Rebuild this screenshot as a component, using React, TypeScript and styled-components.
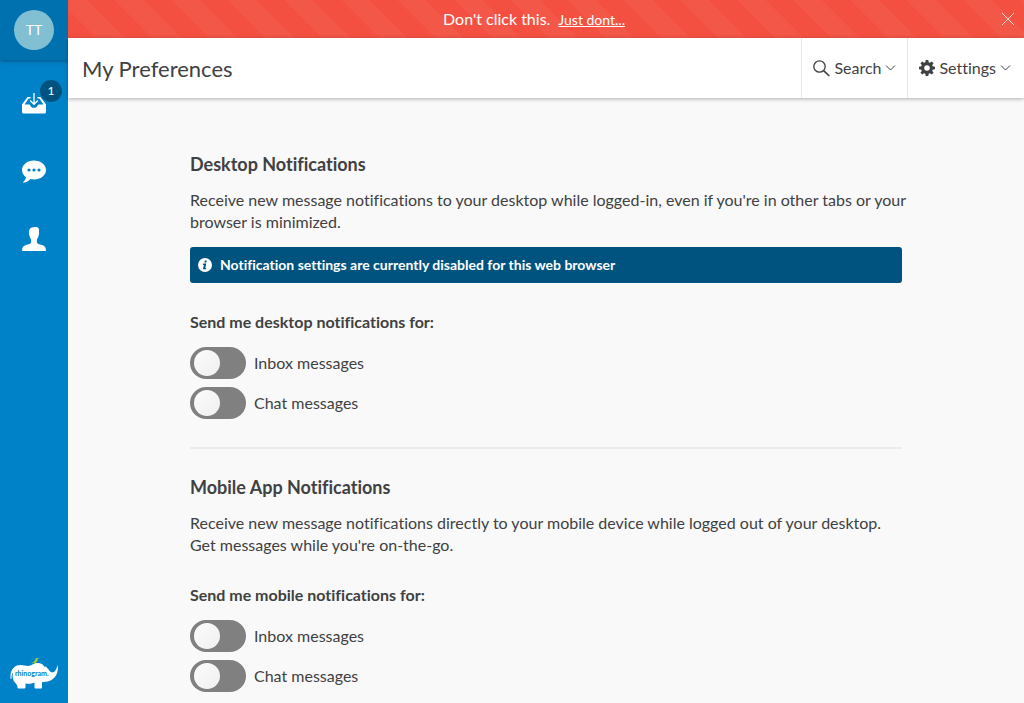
import React from 'react';
import styled, { createGlobalStyle } from 'styled-components';

const GlobalStyle = createGlobalStyle`
  *, *::before, *::after { box-sizing: border-box; }
  body {
    margin: 0;
    background: #f9f9f9;
    color: #3f4142;
    font: 16px/22px Lato, "Liberation Sans", sans-serif;
    font-variant-ligatures: none;
  }
  button { font: inherit; font-variant-ligatures: none; color: inherit; border: 0; padding: 0; background: none; cursor: pointer; }
`;

const Shell = styled.div`
  display: grid;
  grid-template-columns: 68px minmax(0, 1fr);
  height: 100vh;
  overflow: hidden;
`;

const Sidebar = styled.nav`
  display: flex;
  flex-direction: column;
  align-items: center;
  background: #0082c8;
  padding-bottom: 12px;
`;

const AvatarPanel = styled.div`
  display: flex;
  align-self: stretch;
  justify-content: center;
  align-items: center;
  height: 60px;
  background: #0071af;
  box-shadow: 0 1px 4px rgba(0, 0, 0, 0.35);
`;

const Avatar = styled.button`
  width: 40px;
  height: 40px;
  border-radius: 50%;
  background: #80c0d2;
  color: #fff;
  font-size: 14px;
`;

const NavList = styled.ul`
  flex: 1;
  list-style: none;
  margin: 0;
  padding: 9px 0 0;
`;

const NavLink = styled.a`
  position: relative;
  display: flex;
  align-items: center;
  justify-content: center;
  width: 68px;
  height: 68px;
`;

const Badge = styled.span`
  position: absolute;
  top: 11px;
  right: 6px;
  width: 22px;
  height: 22px;
  border-radius: 50%;
  background: #00537f;
  color: #fff;
  font-size: 12px;
  text-align: center;
`;

const Page = styled.div`
  display: flex;
  flex-direction: column;
  min-height: 0;
`;

const Alert = styled.div`
  display: grid;
  grid-template-columns: 1fr 32px;
  align-items: center;
  flex: none;
  height: 38px;
  padding-left: 8px;
  color: #fff;
  background: repeating-linear-gradient(
    45deg,
    #f45042,
    #f45042 20px,
    #f35747 20px,
    #f35747 40px
  );
`;

const AlertText = styled.p`
  margin: 0;
  text-align: center;
`;

const AlertLink = styled.a`
  margin-left: 8px;
  color: inherit;
  font-size: 14px;
`;

const CloseButton = styled.button`
  display: flex;
  align-items: center;
  justify-content: center;
  height: 38px;
`;

const Header = styled.header`
  position: relative;
  display: flex;
  flex: none;
  height: 60px;
  background: #fff;
  box-shadow: 0 1px 4px rgba(0, 0, 0, 0.3);
`;

const Title = styled.h1`
  flex: 1;
  margin: 0;
  padding-left: 14px;
  font-size: 22px;
  font-weight: 400;
  line-height: 62px;
`;

const HeaderButton = styled.button`
  display: flex;
  align-items: center;
  gap: 4px;
  padding: 0 11px;
  border-left: 1px solid #e6e6e6;

  &:last-child { padding-right: 13px; }
`;

const Scroll = styled.main`
  flex: 1;
  min-height: 0;
  overflow: hidden;
`;

const Content = styled.div`
  max-width: 712px;
  margin: 0 auto;
  padding-top: 55px;
`;

const Section = styled.section`
  & + & {
    margin-top: 28px;
    padding-top: 27px;
    border-top: 2px solid #ececec;
  }
`;

const SectionTitle = styled.h2`
  margin: 0 0 14px;
  font-size: 18px;
  line-height: 22px;
`;

const Text = styled.p`
  margin: 0 -8px 0 0;
`;

const Notice = styled.div`
  display: flex;
  align-items: center;
  gap: 8px;
  height: 36px;
  margin-top: 14px;
  padding: 0 8px;
  border-radius: 3px;
  background: #00537f;
  color: #fff;
  font-size: 14px;
  font-weight: 700;
`;

const Group = styled.fieldset`
  margin: 28px 0 0;
  padding: 0;
  border: 0;
  min-width: 0;
`;

const Legend = styled.legend`
  padding: 0 0 14px;
  font-weight: 700;
`;

const ToggleRow = styled.label`
  display: flex;
  align-items: center;
  gap: 8px;
  height: 32px;
  cursor: pointer;

  & + & { margin-top: 8px; }
`;

const Switch = styled.input`
  appearance: none;
  width: 56px;
  height: 32px;
  margin: 0;
  padding: 3px 4px;
  border-radius: 16px;
  background: #808080;
  cursor: pointer;

  &::before {
    content: "";
    display: block;
    width: 26px;
    height: 26px;
    border-radius: 50%;
    background: linear-gradient(135deg, #fcfcfc, #efefef);
  }
  &:checked { background: #0082c8; }
  &:checked::before { margin-left: 22px; }
`;

const InboxIcon = () => (
  <svg width="24" height="22" viewBox="0 0 24 22" fill="none" aria-hidden="true">
    <path d="M0 12.500 5.500 5H8.500v1.500H6.600L2.600 12.400H7c.8 0 1 .4 1.300 1 .7 1.500 1.900 2.400 3.700 2.400s3-.9 3.700-2.400c.3-.6.5-1 1.300-1h4.400L17.400 6.500H15.500V5h3L24 12.500V20a1.500 1.500 0 0 1-1.500 1.500h-21A1.500 1.500 0 0 1 0 20Z" fill="#fff" />
    <path d="M12 1v11M8.200 8.500 12 12.300l3.800-3.800" stroke="#fff" strokeWidth="1.300" />
  </svg>
);

const ChatIcon = () => (
  <svg width="24" height="23" viewBox="0 0 24 23" aria-hidden="true">
    <path d="M12 .5C5.400.5 0 4.700 0 10c0 3 1.500 5.500 4 7.200-.3 2-1.400 3.700-2.700 4.700-.4.400-.2.900.3.800 2.700-.3 5-1.400 6.700-3.600 1.200.3 2.400.4 3.700.4 6.600 0 12-4.200 12-9.500S18.600.5 12 .5Z" fill="#fff" />
    <g fill="#0082c8"><circle cx="7" cy="10" r="1.600" /><circle cx="12" cy="10" r="1.600" /><circle cx="17" cy="10" r="1.600" /></g>
  </svg>
);

const PersonIcon = () => (
  <svg width="24" height="24" viewBox="0 0 24 24" aria-hidden="true">
    <path d="M7 4.500C7.300 1.500 9 .4 11.500.3c1-.3 3.300-.4 4.300.2 1.200.8 1.400 2.200 1.200 4 .1 2-.1 3.200-.4 4.200-.3 1.500-.9 2.700-1.700 3.600v3.200c.4 1.200 2.200 1.700 5 2.600 3 .9 4.100 2.600 4.100 5.900H0c0-3.300 1.100-5 4.100-5.900 2.800-.9 4.600-1.400 5-2.600v-3.200C8.300 11.400 7.700 10.200 7.400 8.700 7.100 7.700 6.900 6.500 7 4.500Z" fill="#fff" />
  </svg>
);

const Logo = () => (
  <svg width="48" height="34" viewBox="0 0 48 34" role="img" aria-label="rhinogram">
    <path d="M.6 22C-.2 16 2 10.500 7 8.500c4-1.500 8 .4 11 .4 4 0 5-2.900 9-2.900 4 0 6.500 1.500 7.500 4 1-.9 1.800-.9 2.400.8 2 1.500 2.600 4.200 5 4.700C45 15.500 46.500 12 47.700 8c1 7-1.700 13-7.200 15.500-3.500 1.700-6.500 1-8.500 1.700V30c0 1-.5 1.500-1.500 1.500H26c-1 0-1.500-.5-1.500-1.500v-4.500c-3 1.500-6.500 1.400-9 1V30c0 1-.5 1.500-1.500 1.500H9c-1 0-1.500-.5-1.500-1.500C7.500 26.500 3 25.500 2.700 20c0-2 0-3 .4-4.500C1.500 17 1.600 20 1.400 22Z" fill="#fff" />
    <path d="M21 5c2 .5 3-.3 4-1.800.2-1.700 1-2.400 2-2.200l2 .6-1.300.6c-.2 2.200-1 3.300-2.700 3.600V7h-.8V5.800C23 6 22 5.700 21 5Z" fill="#9bcb3c" />
    <text x="5" y="19" fill="#0082c8" fontFamily="Lato, sans-serif" fontWeight="700" fontSize="7">rhinogram.</text>
  </svg>
);

const SearchIcon = () => (
  <svg width="17" height="17" viewBox="0 0 17 17" fill="none" stroke="currentColor" aria-hidden="true">
    <circle cx="6.500" cy="6.500" r="5.700" strokeWidth="1.300" />
    <path d="m10.600 10.600 5.700 5.400" strokeWidth="1.700" />
  </svg>
);

const GearIcon = () => (
  <svg width="16" height="16" viewBox="0 0 16 16" aria-hidden="true">
    <g fill="currentColor">
      <path fillRule="evenodd" d="M8 2a6 6 0 1 0 0 12A6 6 0 0 0 8 2Zm0 3.200a2.800 2.800 0 1 1 0 5.600 2.800 2.800 0 0 1 0-5.600Z" />
      {[0, 45, 90, 135, 180, 225, 270, 315].map((angle) => (
        <path key={angle} d="M6.200 3 6.700 0h2.600l.5 3Z" transform={`rotate(${angle} 8 8)`} />
      ))}
    </g>
  </svg>
);

const Chevron = () => (
  <svg width="11" height="6" viewBox="0 0 11 6" fill="none" stroke="currentColor" aria-hidden="true">
    <path d="M1 .5 5.500 5 10 .5" />
  </svg>
);

const CloseIcon = () => (
  <svg width="12" height="12" viewBox="0 0 12 12" fill="none" stroke="#fff" aria-hidden="true">
    <path d="m0 0 12 12M12 0 0 12" opacity=".8" />
  </svg>
);

const InfoIcon = () => (
  <svg width="14" height="14" viewBox="0 0 14 14" aria-hidden="true">
    <circle cx="7" cy="7" r="7" fill="#fff" />
    <path d="M6.800 2.500h2l-.4 1.900h-2ZM5.200 5.600h3l-.9 4.300h1L8 11.200H5l.9-4.300H4.900Z" fill="#00537f" />
  </svg>
);

const Toggles = ({ legend }: { legend: string }) => (
  <Group>
    <Legend>{legend}</Legend>
    {['Inbox messages', 'Chat messages'].map((label) => (
      <ToggleRow key={label}>
        <Switch type="checkbox" role="switch" />
        {label}
      </ToggleRow>
    ))}
  </Group>
);

export default function App() {
  return (
    <>
      <GlobalStyle />
      <Shell>
        <Sidebar>
          <AvatarPanel><Avatar>TT</Avatar></AvatarPanel>
          <NavList>
            <li><NavLink href="#inbox" aria-label="Inbox"><InboxIcon /><Badge>1</Badge></NavLink></li>
            <li><NavLink href="#chat" aria-label="Chat"><ChatIcon /></NavLink></li>
            <li><NavLink href="#contacts" aria-label="Contacts"><PersonIcon /></NavLink></li>
          </NavList>
          <Logo />
        </Sidebar>
        <Page>
          <Alert role="alert">
            <AlertText>Don't click this.<AlertLink href="#dont">Just dont...</AlertLink></AlertText>
            <CloseButton aria-label="Close"><CloseIcon /></CloseButton>
          </Alert>
          <Header>
            <Title>My Preferences</Title>
            <HeaderButton><SearchIcon />Search<Chevron /></HeaderButton>
            <HeaderButton><GearIcon />Settings<Chevron /></HeaderButton>
          </Header>
          <Scroll>
            <Content>
              <Section>
                <SectionTitle>Desktop Notifications</SectionTitle>
                <Text>
                  Receive new message notifications to your desktop while logged-in, even if you're in
                  other tabs or your browser is minimized.
                </Text>
                <Notice><InfoIcon />Notification settings are currently disabled for this web browser</Notice>
                <Toggles legend="Send me desktop notifications for:" />
              </Section>
              <Section>
                <SectionTitle>Mobile App Notifications</SectionTitle>
                <Text>
                  Receive new message notifications directly to your mobile device while logged out of
                  your desktop.
                  <br />
                  Get messages while you're on-the-go.
                </Text>
                <Toggles legend="Send me mobile notifications for:" />
              </Section>
            </Content>
          </Scroll>
        </Page>
      </Shell>
    </>
  );
}
